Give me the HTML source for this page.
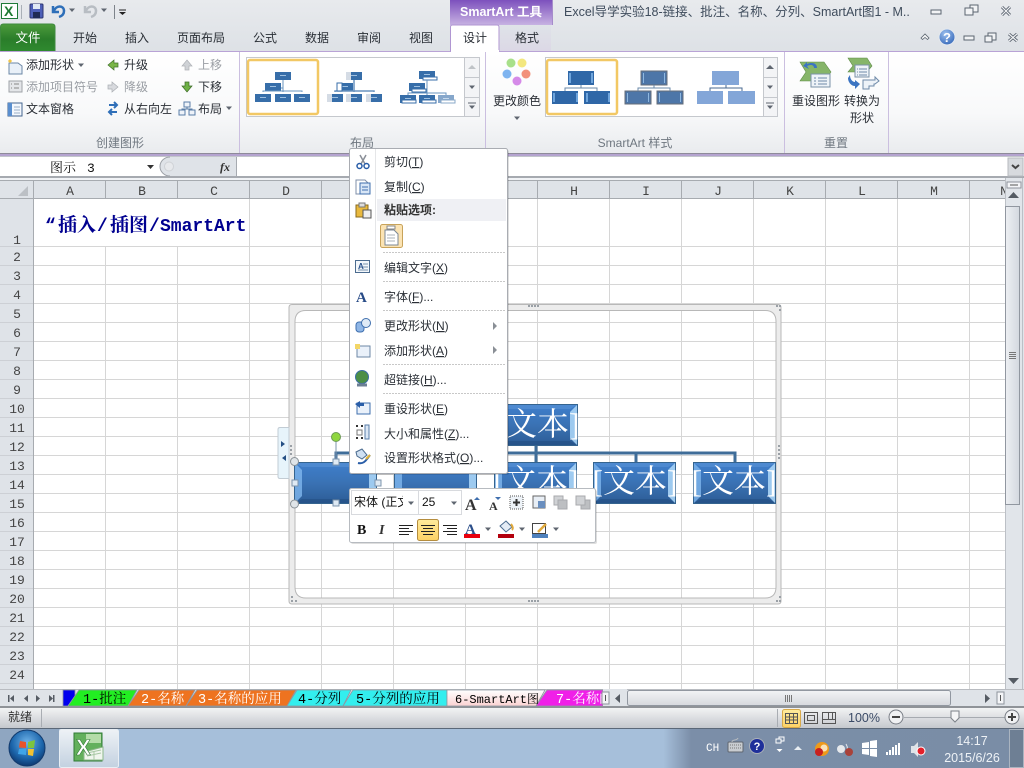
<!DOCTYPE html>
<html><head><meta charset="utf-8"><title>Excel SmartArt</title>
<style>
html,body{margin:0;padding:0;width:1024px;height:768px;overflow:hidden;background:#fff}
svg{display:block}
text{font-family:"Liberation Sans","Noto Sans CJK SC",sans-serif;font-size:12px;fill:#2a2f36;white-space:pre}
.g{fill:#9a9ea4}.l{fill:#6f7780}.c{text-anchor:middle}
.m{font-family:"Liberation Mono","Noto Serif CJK SC",monospace;font-size:13px;fill:#444;text-anchor:middle}
.tab{font-family:"Liberation Mono","Noto Serif CJK SC",monospace;font-size:13.5px;fill:#000}
.w{fill:#fff}
.big{font-family:"Liberation Serif","Noto Serif CJK SC",serif;font-size:32px;fill:#fff;text-anchor:middle}
.cell{font-family:"Liberation Mono","Noto Serif CJK SC",monospace;font-weight:bold;font-size:18px;fill:#000090}
</style></head><body>
<svg xmlns="http://www.w3.org/2000/svg" width="1024" height="768" viewBox="0 0 1024 768">
<defs>
<clipPath id="fontclip"><rect x="352" y="491" width="51" height="23"/></clipPath>
<linearGradient id="rib" x1="0" y1="0" x2="0" y2="1"><stop offset="0" stop-color="#fff"/><stop offset=".6" stop-color="#f8f9fa"/><stop offset="1" stop-color="#e9ebee"/></linearGradient>
<linearGradient id="top" x1="0" y1="0" x2="0" y2="1"><stop offset="0" stop-color="#e8eaed"/><stop offset="1" stop-color="#dde1e6"/></linearGradient>
<linearGradient id="green" x1="0" y1="0" x2="0" y2="1"><stop offset="0" stop-color="#4d9b3c"/><stop offset=".55" stop-color="#2a7d2a"/><stop offset="1" stop-color="#2f8a2f"/></linearGradient>
<linearGradient id="pur" x1="0" y1="0" x2="0" y2="1"><stop offset="0" stop-color="#7d50bd"/><stop offset="1" stop-color="#c7b2e2"/></linearGradient>
<linearGradient id="pur2" x1="0" y1="0" x2="0" y2="1"><stop offset="0" stop-color="#dfe3e8"/><stop offset="1" stop-color="#dcd8e6"/></linearGradient>
<linearGradient id="box" x1="0" y1="0" x2="0" y2="1"><stop offset="0" stop-color="#3f7fcc"/><stop offset=".5" stop-color="#3a72b4"/><stop offset="1" stop-color="#2c5c95"/></linearGradient>
<linearGradient id="st" x1="0" y1="0" x2="0" y2="1"><stop offset="0" stop-color="#f2f3f4"/><stop offset="1" stop-color="#c5c8cd"/></linearGradient>
<linearGradient id="thumbv" x1="0" y1="0" x2="1" y2="0"><stop offset="0" stop-color="#eef0f3"/><stop offset="1" stop-color="#d3d8df"/></linearGradient>
<linearGradient id="thumbh" x1="0" y1="0" x2="0" y2="1"><stop offset="0" stop-color="#f2f3f5"/><stop offset="1" stop-color="#d6d9de"/></linearGradient>
<linearGradient id="tb" x1="0" y1="0" x2="1" y2="0"><stop offset="0" stop-color="#a6bfda"/><stop offset=".648" stop-color="#a6bfda"/><stop offset=".675" stop-color="#7b8ea8"/><stop offset="1" stop-color="#7a8da6"/></linearGradient>
<linearGradient id="xb" x1="0" y1="0" x2="0" y2="1"><stop offset="0" stop-color="#eef2f6"/><stop offset="1" stop-color="#c3d1e0"/></linearGradient>
<linearGradient id="gold" x1="0" y1="0" x2="0" y2="1"><stop offset="0" stop-color="#ffeb9c"/><stop offset="1" stop-color="#fdd265"/></linearGradient>
<linearGradient id="tw" x1="0" y1="0" x2="0" y2="1"><stop offset="0" stop-color="#fff"/><stop offset="1" stop-color="#fbd2d2"/></linearGradient>
<radialGradient id="orb" cx=".5" cy=".35" r=".7"><stop offset="0" stop-color="#6fb3e8"/><stop offset=".6" stop-color="#1c66ac"/><stop offset="1" stop-color="#0b2f63"/></radialGradient>
<radialGradient id="hb" cx=".4" cy=".3" r=".8"><stop offset="0" stop-color="#9cc0ee"/><stop offset="1" stop-color="#2e62b6"/></radialGradient>
<g id="bx"><rect x=".5" y=".5" width="82" height="41" fill="url(#box)" stroke="#35648f"/><path d="M1 1l7 7v26l-7 7z" fill="#7fb6ee" opacity=".8"/><path d="M82 1l-7 7v26l7 7z" fill="#a8d4f6" opacity=".9"/><path d="M1 1h81l-7 4H8z" fill="#5a93d6" opacity=".6"/><path d="M1 41h81l-7-4H8z" fill="#234f82" opacity=".6"/></g>
<g id="sm"><rect width="16" height="8" fill="#376ea9"/><rect x="5" y="3" width="6" height="1" fill="#9fc0e0"/></g>
<g id="tag"><path d="M0 0h9l3 3v11H0z" fill="#fff" stroke="#7f8fa8"/></g>
<g id="hd"><rect width="6" height="6" fill="#dfeaf4" stroke="#7d94ad"/></g>
<g id="rh"><circle r="4" fill="#dfe4e8" stroke="#8a9298"/></g>
<g id="aup"><path d="M-4 2L0-2 4 2z" fill="#5f6670"/></g>
<g id="adn"><path d="M-3-1.500h6L0 2z" fill="#5f6670"/></g>
<g id="ar"><path d="M0-4L4 0 0 4z" fill="#8a8f96"/></g>
<g id="s"><path d="M1 3h9l4 3v8H1z" fill="#e9f0f8" stroke="#6c87a6"/><path d="M0 1h4M2-1v4M1 0l2 2M3 0l-2 2" stroke="#f0c64a" stroke-width="1"/></g>
</defs>

<!-- Title bar -->
<rect width="1024" height="52" fill="url(#top)"/>
<rect x="1.500" y="3.500" width="16" height="15" fill="#fff" stroke="#1f7a38"/><text x="4" y="16" style="font-weight:bold;font-size:14px;fill:#1e7a32">X</text>
<path d="M21.500 5v14" stroke="#aab0b7"/>
<rect x="30" y="4" width="13" height="14" rx="1" fill="#4d5fb8" stroke="#2d3470"/><rect x="33" y="4" width="7" height="5" fill="#dfe8f5"/><rect x="33" y="12" width="7" height="6" fill="#1f2a55"/>
<path d="M53 6v6h6M54 11c2-6 10-6 10 0 0 3-2 5-5 6" fill="none" stroke="#2e6fb9" stroke-width="2.500"/>
<use href="#adn" x="72" y="10"/>
<path d="M85 6v6h6M86 11c2-6 10-6 10 0 0 3-2 5-5 6" fill="none" stroke="#b8bdc3" stroke-width="2.500"/>
<use href="#adn" x="104" y="10"/>
<path d="M114.500 5v14" stroke="#7d838a"/>
<path d="M119 10h7" stroke="#222"/><path d="M119 12h7l-3.500 3z" fill="#222"/>

<!-- contextual title -->
<rect x="450" width="102" height="25" fill="url(#pur)"/>
<text x="460" y="16" style="font-weight:bold;fill:#fff;font-size:12.500px">SmartArt 工具</text>
<rect x="552" width="1" height="25" fill="#a68ccb"/>
<text x="564" y="16" style="fill:#3f4c5c;font-size:12.500px">Excel导学实验18-链接、批注、名称、分列、SmartArt图1 - M..</text>
<!-- window controls -->
<rect x="931" y="10" width="10" height="4" fill="#f2f3f5" stroke="#5b6470"/>
<g fill="#f2f3f5" stroke="#5b6470"><rect x="970" y="5" width="8" height="7"/><rect x="965" y="8" width="8" height="7"/></g>
<path d="M1002 7l8 8m0-8l-8 8" stroke="#5b6470" stroke-width="3"/><path d="M1002 7l8 8m0-8l-8 8" stroke="#f2f3f5" stroke-width="1.200"/>
<path d="M921 38l4-4 4 4-1.500 1.500-2.500-2-2.500 2z" fill="#f4f5f6" stroke="#59626d" stroke-width=".8"/>
<circle cx="947" cy="37" r="8" fill="url(#hb)" stroke="#e3e8ef"/><text x="947" y="42" class="c" style="font-weight:bold;font-size:13px;fill:#fff">?</text>
<rect x="964" y="36" width="10" height="4" fill="#f2f3f5" stroke="#5b6470"/>
<g fill="#f2f3f5" stroke="#5b6470"><rect x="988" y="33" width="8" height="7"/><rect x="985" y="36" width="7" height="6"/></g>
<path d="M1009 34l8 7m0-7l-8 7" stroke="#5b6470" stroke-width="3"/><path d="M1009 34l8 7m0-7l-8 7" stroke="#f2f3f5" stroke-width="1.200"/>

<!-- Tabs -->
<path d="M.5 51.500V27q0-3 3-3H52q3 0 3 3v24.500z" fill="url(#green)" stroke="#3f8a3f"/>
<text x="28" y="42" class="c w" style="font-size:12.500px;fill:#fff">文件</text>
<rect x="500" y="25" width="51" height="26" fill="url(#pur2)"/>
<g style="font-size:12px"><text x="85" y="42" class="c">开始</text><text x="137" y="42" class="c">插入</text><text x="201" y="42" class="c">页面布局</text><text x="265" y="42" class="c">公式</text><text x="317" y="42" class="c">数据</text><text x="369" y="42" class="c">审阅</text><text x="421" y="42" class="c">视图</text><text x="527" y="42" class="c">格式</text></g>

<!-- Ribbon -->
<rect y="52" width="1024" height="102" fill="url(#rib)"/>
<path d="M0 51.500H1024" stroke="#b9a3d6"/>
<path d="M450.500 51.500V27q0-2 2-2H497q2 0 2 2v24.500" fill="#fff" stroke="#b096d2"/>
<rect x="451" y="50" width="48" height="3" fill="#fff"/>
<text x="475" y="42" class="c">设计</text>
<path d="M239.500 52v101M485.500 52v101M784.500 52v101M888.500 52v101" stroke="#cbbfe0"/>
<rect y="153" width="1024" height="3" fill="#b4a3cf"/>
<rect y="153" width="1024" height="1" fill="#8e8a9a"/>
<text x="120" y="147" class="c l">创建图形</text><text x="362" y="147" class="c l">布局</text><text x="635" y="147" class="c l">SmartArt 样式</text><text x="836" y="147" class="c l">重置</text>

<!-- Create shape -->
<use href="#s" x="8" y="60"/>
<text x="26" y="69">添加形状</text><use href="#adn" x="81" y="65" />
<rect x="9" y="81" width="13" height="11" fill="#e4e6e9" stroke="#9fa3a8"/><path d="M11 84h1m2 0h5M11 88h1m2 0h5" stroke="#888"/>
<text x="26" y="91" class="g">添加项目符号</text>
<rect x="8" y="103" width="14" height="13" fill="#f4f8fd" stroke="#44658f"/><rect x="8" y="103" width="4" height="13" fill="#5a8fcf"/><path d="M14 107h6M14 110h6M14 113h6" stroke="#9bb0c8"/>
<text x="26" y="113">文本窗格</text>
<path d="M108 65l6-5v3h4v4h-4v3z" fill="#7ab648" stroke="#3f6f2a" stroke-width=".7"/>
<text x="124" y="69">升级</text>
<path d="M118 87l-6-5v3h-4v4h4v3z" fill="#d8dade" stroke="#aaaeb3" stroke-width=".7"/>
<text x="124" y="91" class="g">降级</text>
<path d="M109 105h8M114 102l3 3-3 3" stroke="#2f6fb8" stroke-width="2" fill="none"/><path d="M117 112h-8M112 109l-3 3 3 3" stroke="#2f6fb8" stroke-width="2" fill="none"/>
<text x="124" y="113">从右向左</text>
<path d="M187 60l5 6h-3v4h-4v-4h-3z" fill="#cfd2d6" stroke="#aeb1b6" stroke-width=".7"/>
<text x="198" y="69" class="g">上移</text>
<path d="M187 92l5-6h-3v-4h-4v4h-3z" fill="#6eb045" stroke="#3c6a28" stroke-width=".7"/>
<text x="198" y="91">下移</text>
<g fill="#eef3f9" stroke="#5a7ea8"><rect x="184" y="102" width="6" height="5"/><rect x="179" y="110" width="6" height="5"/><rect x="189" y="110" width="6" height="5"/></g><path d="M187 107v2M182 110v-1h10v1" fill="none" stroke="#5a7ea8"/>
<text x="198" y="113">布局</text><use href="#adn" x="229" y="108"/>

<!-- Layout gallery -->
<rect x="246.500" y="57.500" width="233" height="59" fill="#fff" stroke="#c5c8cd"/>
<rect x="248" y="60" width="70" height="54" rx="2" fill="#fff" stroke="#f2c864" stroke-width="2.500"/>
<use href="#sm" x="275" y="72"/><use href="#sm" x="265" y="83"/><use href="#sm" x="255" y="94"/><use href="#sm" x="275" y="94"/><use href="#sm" x="294" y="94"/>
<path d="M283 80v12M263 92v-1h39v1M281 88h2" fill="none" stroke="#6a94bf"/>
<use href="#sm" x="346" y="72"/><use href="#sm" x="337" y="83"/><use href="#sm" x="327" y="94"/><use href="#sm" x="346" y="94"/><use href="#sm" x="366" y="94"/>
<path d="M354 80v12M335 92v-1h39v1" fill="none" stroke="#6a94bf" stroke-width="1.500"/>
<g fill="#d5dce5"><rect x="346" y="72" width="5" height="8"/><rect x="337" y="83" width="5" height="8" fill="#fff" stroke="#376ea9"/><rect x="327" y="94" width="5" height="8"/><rect x="346" y="94" width="5" height="8"/><rect x="366" y="94" width="5" height="8"/></g>
<use href="#sm" x="419" y="71"/><use href="#sm" x="409" y="83"/><use href="#sm" x="400" y="95"/><use href="#sm" x="419" y="95"/><use href="#sm" x="438" y="95" opacity=".6"/>
<g fill="#fff" stroke="#376ea9"><rect x="423" y="77" width="14" height="3"/><rect x="412" y="89" width="14" height="3"/><rect x="402" y="100" width="14" height="3"/><rect x="422" y="100" width="14" height="3"/><rect x="441" y="100" width="14" height="3" stroke="#8aa8c8"/></g>
<path d="M427 80v15M408 95v-2h38v2" fill="none" stroke="#6a94bf"/>
<rect x="464.500" y="57.500" width="15" height="59" fill="#f3f4f6" stroke="#c5c8cd"/><path d="M465 77.500h14M465 97.500h14" stroke="#c5c8cd"/>
<use href="#aup" x="472" y="67" opacity=".35"/><use href="#adn" x="472" y="87"/><path d="M468 103h8" stroke="#5f6670"/><use href="#adn" x="472" y="107"/>

<!-- Change colours -->
<circle cx="511" cy="63" r="4.500" fill="#a8e08a"/><circle cx="522" cy="63" r="4.500" fill="#f3e77e"/><circle cx="507" cy="74" r="4.500" fill="#7eb4f0"/><circle cx="526" cy="74" r="4.500" fill="#f2917b"/><circle cx="517" cy="81" r="4.500" fill="#d58ae8"/>
<text x="517" y="105" class="c">更改颜色</text><use href="#adn" x="517" y="118"/>

<!-- Style gallery -->
<rect x="545.500" y="57.500" width="232" height="59" fill="#fff" stroke="#c5c8cd"/>
<rect x="547" y="60" width="70" height="54" rx="2" fill="#fff" stroke="#f2c864" stroke-width="2.500"/>
<g><rect x="568" y="71" width="26" height="14" fill="#2f67a7"/><rect x="552" y="91" width="26" height="13" fill="#2f67a7"/><rect x="584" y="91" width="26" height="13" fill="#2f67a7"/><path d="M581 85v3M565 91v-3h32v3" fill="none" stroke="#6a88a8"/></g>
<g fill="#6fa5dc"><rect x="569" y="73" width="2" height="10"/><rect x="591" y="73" width="2" height="10"/><rect x="553" y="93" width="2" height="9"/><rect x="586" y="93" width="2" height="9"/><rect x="576" y="93" width="2" height="9"/><rect x="608" y="93" width="2" height="9"/></g>
<g fill="#4d76a8" stroke="#666e78"><rect x="641" y="71" width="26" height="14"/><rect x="625" y="91" width="26" height="13"/><rect x="657" y="91" width="26" height="13"/></g>
<g fill="#8fb8e0"><rect x="643" y="73" width="1" height="10"/><rect x="664" y="73" width="1" height="10"/><rect x="627" y="93" width="1" height="9"/><rect x="648" y="93" width="1" height="9"/><rect x="659" y="93" width="1" height="9"/><rect x="680" y="93" width="1" height="9"/></g>
<path d="M654 85v3M638 91v-3h32v3" fill="none" stroke="#6a88a8"/>
<g fill="#83a6d8"><rect x="712" y="71" width="27" height="14"/><rect x="697" y="91" width="26" height="13"/><rect x="728" y="91" width="27" height="13"/></g>
<path d="M726 85v3M710 91v-3h32v3" fill="none" stroke="#4a6a90"/>
<rect x="763.500" y="57.500" width="14" height="59" fill="#f3f4f6" stroke="#c5c8cd"/><path d="M764 77.500h14M764 97.500h14" stroke="#c5c8cd"/>
<use href="#aup" x="770" y="67"/><use href="#adn" x="770" y="87"/><path d="M766 103h8" stroke="#5f6670"/><use href="#adn" x="770" y="107"/>

<!-- Reset -->
<path d="M800 62h24l7 10-7 9h-24l6-9z" fill="#86b569" stroke="#5f8c48" stroke-width=".6"/>
<rect x="811" y="74" width="19" height="13" fill="#eef3f8" stroke="#7b92a8"/><path d="M814 78h2m2 0h9M814 81h2m2 0h9M814 84h2m2 0h9" stroke="#6e8aa8"/>
<path d="M803 66l4-4v2c5-2 10-1 10 4l-3 0c0-3-3-4-7-2l2 3z" fill="#3b74c2"/>
<text x="816" y="105" class="c">重设图形</text>
<path d="M848 58h19l5 8-5 6h-19l5-6z" fill="#86b569" stroke="#5f8c48" stroke-width=".6"/>
<rect x="855" y="65" width="14" height="12" fill="#eef3f8" stroke="#7b92a8"/><path d="M857 69h1m1 0h8M857 72h1m1 0h8M857 75h1m1 0h8" stroke="#6e8aa8"/>
<path d="M850 75c0 5 3 7 5 7v-2l5 4-5 5v-3c-4 0-7-4-7-8z" fill="#3b74c2"/>
<path d="M863 80h12v-3l4 4-4 3-1 0v2h-5v3h-6z" fill="#eef3f8" stroke="#6e8aa8"/>
<text x="862" y="105" class="c">转换为</text><text x="862" y="122" class="c">形状</text>

<!-- Formula bar -->
<rect y="156" width="1024" height="21" fill="#fff"/>
<rect y="176" width="1024" height="2" fill="#a6aab0"/>
<rect y="156" width="1024" height="1" fill="#c3c6cc"/>
<rect x="160" y="157" width="77" height="19" fill="#dfe3e8"/>
<path d="M236.500 157v19" stroke="#a6aab0"/>
<path d="M170 157a10 9.500 0 0 0 0 19h-10v-19z" fill="#fff"/>
<path d="M170 157a10 9.500 0 0 0 0 19" fill="none" stroke="#9ea2a8"/>
<circle cx="169" cy="166.500" r="4.500" fill="#e7e9ec" stroke="#cfd2d6"/>
<text x="50" y="172" style="font-size:13px;font-family:'Liberation Mono','Noto Serif CJK SC',monospace;fill:#111">图示<tspan x="87">3</tspan></text>
<path d="M147 165h7l-3.500 4z" fill="#333"/>
<text x="220" y="171" style="font-family:'Liberation Serif',serif;font-style:italic;font-weight:bold;font-size:12px;fill:#333">fx</text>
<rect x="1008" y="158" width="15" height="18" fill="#d7dade" stroke="#b7babf"/><path d="M1012 165l3.500 3 3.500-3" fill="none" stroke="#444" stroke-width="2"/>

<!-- Grid -->
<rect y="178" width="1024" height="511" fill="#fff"/>
<rect y="181" width="1005" height="18" fill="#dfe3e8"/>
<rect y="199" width="33" height="490" fill="#dfe3e8"/>
<rect y="178" width="1024" height="3" fill="#f1f3f6"/>
<path d="M0 180.500H1005M0 198.500H1005M33.500 181V689" stroke="#a7abb0"/>
<path d="M28 186v10H18z" fill="#bcc0c5"/>
<g stroke="#a7abb0"><path d="M105.500 181v18M177.500 181v18M249.500 181v18M321.500 181v18M393.500 181v18M465.500 181v18M537.500 181v18M609.500 181v18M681.500 181v18M753.500 181v18M825.500 181v18M897.500 181v18M969.500 181v18"/></g>
<g stroke="#cdd0d5"><path d="M0 246.500h33M0 265.500h33M0 284.500h33M0 303.500h33M0 322.500h33M0 341.500h33M0 360.500h33M0 379.500h33M0 398.500h33M0 417.500h33M0 436.500h33M0 455.500h33M0 474.500h33M0 493.500h33M0 512.500h33M0 531.500h33M0 550.500h33M0 569.500h33M0 588.500h33M0 607.500h33M0 626.500h33M0 645.500h33M0 664.500h33M0 683.500h33"/></g>
<g stroke="#d6d6d6"><path d="M249.500 199v490M321.500 199v490M393.500 199v490M465.500 199v490M537.500 199v490M609.500 199v490M681.500 199v490M753.500 199v490M825.500 199v490M897.500 199v490M969.500 199v490M105.500 246v443M177.500 246v443"/>
<path d="M34 246.500h971M34 265.500h971M34 284.500h971M34 303.500h971M34 322.500h971M34 341.500h971M34 360.500h971M34 379.500h971M34 398.500h971M34 417.500h971M34 436.500h971M34 455.500h971M34 474.500h971M34 493.500h971M34 512.500h971M34 531.500h971M34 550.500h971M34 569.500h971M34 588.500h971M34 607.500h971M34 626.500h971M34 645.500h971M34 664.500h971M34 683.500h971"/></g>
<g><text class="m" x="70" y="195">A</text><text class="m" x="142" y="195">B</text><text class="m" x="214" y="195">C</text><text class="m" x="286" y="195">D</text><text class="m" x="358" y="195">E</text><text class="m" x="574" y="195">H</text><text class="m" x="646" y="195">I</text><text class="m" x="718" y="195">J</text><text class="m" x="790" y="195">K</text><text class="m" x="862" y="195">L</text><text class="m" x="934" y="195">M</text><text class="m" x="1004" y="195">N</text></g>
<g><text class="m" x="17" y="244">1</text><text class="m" x="17" y="261">2</text><text class="m" x="17" y="280">3</text><text class="m" x="17" y="299">4</text><text class="m" x="17" y="318">5</text><text class="m" x="17" y="337">6</text><text class="m" x="17" y="356">7</text><text class="m" x="17" y="375">8</text><text class="m" x="17" y="394">9</text><text class="m" x="17" y="413">10</text><text class="m" x="17" y="432">11</text><text class="m" x="17" y="451">12</text><text class="m" x="17" y="470">13</text><text class="m" x="17" y="489">14</text><text class="m" x="17" y="508">15</text><text class="m" x="17" y="527">16</text><text class="m" x="17" y="546">17</text><text class="m" x="17" y="565">18</text><text class="m" x="17" y="584">19</text><text class="m" x="17" y="603">20</text><text class="m" x="17" y="622">21</text><text class="m" x="17" y="641">22</text><text class="m" x="17" y="660">23</text><text class="m" x="17" y="679">24</text></g>
<text class="cell" x="45" y="231">“<tspan x="58" style="font-size:19px">插入</tspan><tspan x="97">/</tspan><tspan x="110" style="font-size:19px">插图</tspan><tspan x="149">/</tspan><tspan x="160">SmartArt</tspan></text>

<!-- SmartArt frame -->
<path fill-rule="evenodd" d="M292 304.500H778q3 0 3 3V601q0 3-3 3H292q-3 0-3-3V307.500q0-3 3-3z M306 310.500q-11 0-11 11V587q0 11 11 11H765q11 0 11-11V321.500q0-11-11-11z" fill="#ececec" stroke="#b8b8b8"/>
<g fill="#9aa0a6"><rect x="528" y="305" width="2" height="2"/><rect x="531" y="305" width="2" height="2"/><rect x="534" y="305" width="2" height="2"/><rect x="537" y="305" width="2" height="2"/><rect x="528" y="600" width="2" height="2"/><rect x="531" y="600" width="2" height="2"/><rect x="534" y="600" width="2" height="2"/><rect x="537" y="600" width="2" height="2"/><rect x="778" y="445" width="2" height="2"/><rect x="778" y="449" width="2" height="2"/><rect x="778" y="453" width="2" height="2"/><rect x="778" y="457" width="2" height="2"/><rect x="290" y="445" width="2" height="2"/><rect x="290" y="449" width="2" height="2"/><rect x="290" y="453" width="2" height="2"/><rect x="776" y="305" width="2" height="2"/><rect x="779" y="305" width="2" height="2"/><rect x="779" y="309" width="2" height="2"/><rect x="291" y="600" width="2" height="2"/><rect x="291" y="596" width="2" height="2"/><rect x="295" y="600" width="2" height="2"/><rect x="776" y="600" width="2" height="2"/><rect x="779" y="600" width="2" height="2"/><rect x="779" y="596" width="2" height="2"/></g>

<!-- Org chart -->
<path d="M536 446v16M336 461v-8H735v9M436 453v9M636 453v9" fill="none" stroke="#3f6d99" stroke-width="3"/>
<use href="#bx" x="495" y="404"/><text class="big" x="537" y="435">[文本]</text>
<use href="#bx" x="294" y="462"/>
<use href="#bx" x="394" y="462"/>
<use href="#bx" x="494" y="462"/><text class="big" x="536" y="492">[文本]</text>
<use href="#bx" x="593" y="462"/><text class="big" x="635" y="492">[文本]</text>
<use href="#bx" x="693" y="462"/><text class="big" x="734" y="492">[文本]</text>
<!-- Handles -->
<path d="M336 441v20" stroke="#7d94ad"/>
<circle cx="336" cy="437" r="4.500" fill="#8fd63f" stroke="#6c9a55"/>
<use href="#rh" x="294.500" y="461.500"/><use href="#rh" x="294.500" y="504"/>
<use href="#hd" x="333" y="459"/><use href="#hd" x="333" y="500"/><use href="#hd" x="292" y="480"/><use href="#hd" x="375" y="480"/>
<path d="M289 427.500h-9q-2 0-2 2v47q0 2 2 2h9z" fill="#e7f4fb" stroke="#c2ccd4"/>
<path d="M281 441l4 3-4 3z M286 455l-4 3 4 3z" fill="#244f84"/>

<!-- Context menu -->
<rect x="351" y="150" width="158" height="325" rx="2" fill="#000" opacity=".12"/>
<rect x="349.500" y="148.500" width="158" height="325" rx="2" fill="#fff" stroke="#a9acb2"/>
<path d="M375.500 149v324" stroke="#e5e6e8"/>
<rect x="377" y="199" width="129" height="22" fill="#eff0f4"/>
<g stroke="#c8c8c8" stroke-dasharray="2 1"><path d="M383 252.500h122M383 281.500h122M383 310.500h122M383 364.500h122M383 393.500h122"/></g>
<text x="384" y="166">剪切(<tspan text-decoration="underline">T</tspan>)</text>
<text x="384" y="191">复制(<tspan text-decoration="underline">C</tspan>)</text>
<text x="384" y="214" style="font-weight:bold;fill:#333">粘贴选项:</text>
<text x="384" y="272">编辑文字(<tspan text-decoration="underline">X</tspan>)</text>
<text x="384" y="301">字体(<tspan text-decoration="underline">F</tspan>)...</text>
<text x="384" y="330">更改形状(<tspan text-decoration="underline">N</tspan>)</text>
<text x="384" y="355">添加形状(<tspan text-decoration="underline">A</tspan>)</text>
<text x="384" y="384">超链接(<tspan text-decoration="underline">H</tspan>)...</text>
<text x="384" y="413">重设形状(<tspan text-decoration="underline">E</tspan>)</text>
<text x="384" y="438">大小和属性(<tspan text-decoration="underline">Z</tspan>)...</text>
<text x="384" y="462">设置形状格式(<tspan text-decoration="underline">O</tspan>)...</text>
<use href="#ar" x="493" y="326"/><use href="#ar" x="493" y="350"/>
<!-- menu icons -->
<path d="M360 155l5 9M366 155l-5 9" stroke="#8a8f98" stroke-width="1.500"/><circle cx="359.500" cy="166" r="2.500" fill="none" stroke="#2a5ea8" stroke-width="1.500"/><circle cx="366.500" cy="166" r="2.500" fill="none" stroke="#2a5ea8" stroke-width="1.500"/>
<use href="#tag" x="356" y="180"/><rect x="360" y="183" width="10" height="11" fill="#d8e6f6" stroke="#3f6fae"/><path d="M362 187h6M362 190h6" stroke="#3f6fae"/>
<rect x="356" y="205" width="12" height="12" fill="#e9b93e" stroke="#8a6a1c"/><rect x="359" y="203" width="6" height="4" fill="#ddd" stroke="#777"/><rect x="363" y="210" width="8" height="8" fill="#eee" stroke="#555"/>
<rect x="380.500" y="224.500" width="22" height="23" rx="2" fill="#fbe3b3" stroke="#c8a35a"/><rect x="387" y="226" width="8" height="3" fill="#fff" stroke="#888"/><path d="M385 230h9l4 4v11h-13z" fill="#fff" stroke="#7b8794"/><path d="M387 235h8M387 238h8M387 241h8" stroke="#aab2ba"/>
<rect x="355.500" y="260.500" width="14" height="12" fill="#f3f7fb" stroke="#4c6c8f"/><text x="358" y="269" style="font-size:8px;font-weight:bold;fill:#27508a">A</text><path d="M363 264h5M363 267h5M358 270h10" stroke="#7a93ae"/>
<text x="356" y="302" style="font-family:'Liberation Serif',serif;font-weight:bold;font-size:15px;fill:#274a86">A</text>
<rect x="356" y="322" width="8" height="10" rx="3" fill="#8fb6e6" stroke="#3f6fae"/><circle cx="366" cy="323" r="4.500" fill="#dfeaf6" stroke="#3f6fae"/>
<rect x="357" y="346" width="13" height="11" fill="#eaf1fa" stroke="#6c87a6"/><path d="M355 344h5v5h-5z" fill="#f3d667"/>
<circle cx="362" cy="377" r="6.500" fill="#4c8f46" stroke="#3b6ea5"/><path d="M357 385h10" stroke="#6c7f94" stroke-width="3"/>
<rect x="357" y="403" width="13" height="11" fill="#eaf1fa" stroke="#3f6fae"/><path d="M355 404l5-3v2h4v3h-4v2z" fill="#2a5ea8"/>
<g fill="#333"><rect x="356" y="425" width="2" height="2"/><rect x="361" y="425" width="2" height="2"/><rect x="356" y="437" width="2" height="2"/><rect x="361" y="437" width="2" height="2"/></g><rect x="357" y="430" width="5" height="5" fill="#fff" stroke="#777"/><rect x="365" y="425" width="4" height="14" fill="#dbe7f5" stroke="#5a7ea8"/>
<path d="M356 452l6-3 5 6-5 4-5-3z" fill="#cfe0f2" stroke="#4c6c8f"/><path d="M358 463c4 1 7-1 9-4l3-4" fill="none" stroke="#2a5ea8" stroke-width="2"/><path d="M366 459l4-4" stroke="#e0b23a" stroke-width="2"/>

<!-- Mini toolbar -->
<rect x="351" y="490" width="246" height="54" rx="2" fill="#000" opacity=".13"/>
<rect x="349.500" y="488.500" width="246" height="54" rx="2" fill="#fff" stroke="#b7bbc0"/>
<rect x="351.500" y="490.500" width="67" height="24" fill="#fff" stroke="#d8dade"/>
<rect x="418.500" y="490.500" width="43" height="24" fill="#fff" stroke="#d8dade"/>
<text x="354" y="506" clip-path="url(#fontclip)" style="fill:#111;font-size:12px">宋体 (正文</text>
<use href="#adn" x="411" y="503"/><text x="422" y="506" style="font-size:12px;fill:#111">25</text><use href="#adn" x="454" y="503"/>
<text x="465" y="510" style="font-family:'Liberation Serif',serif;font-weight:bold;font-size:16px;fill:#333">A</text><path d="M474 500l3-3 3 3z" fill="#3f6fae"/>
<text x="489" y="510" style="font-family:'Liberation Serif',serif;font-weight:bold;font-size:12px;fill:#333">A</text><path d="M495 497h6l-3 3z" fill="#3f6fae"/>
<rect x="510" y="496" width="13" height="13" fill="#eef3f8" stroke="#555" stroke-dasharray="1 1"/><path d="M516.500 499v7M513 502.500h7" stroke="#333" stroke-width="2"/>
<rect x="533" y="496" width="12" height="12" fill="#e8eef5" stroke="#666"/><rect x="538" y="501" width="7" height="7" fill="#6a8fbf"/>
<g fill="#d0d2d5" stroke="#a8aaad"><rect x="554" y="496" width="9" height="9"/><rect x="558" y="500" width="9" height="9" fill="#bdbfc2"/><rect x="581" y="500" width="9" height="9" fill="#bdbfc2"/><rect x="576" y="496" width="9" height="9"/></g>
<text x="357" y="534" style="font-family:'Liberation Serif',serif;font-weight:bold;font-size:14px;fill:#111">B</text>
<text x="379" y="534" style="font-family:'Liberation Serif',serif;font-style:italic;font-weight:bold;font-size:14px;fill:#333">I</text>
<path d="M399 525.500h14M399 528.500h10M399 531.500h14M399 534.500h10" stroke="#222"/>
<rect x="417.500" y="519.500" width="21" height="21" rx="2" fill="url(#gold)" stroke="#b58d3e"/>
<path d="M421 525.500h14M423 528.500h10M421 531.500h14M423 534.500h10" stroke="#222"/>
<path d="M443 525.500h14M447 528.500h10M443 531.500h14M447 534.500h10" stroke="#222"/>
<text x="465" y="534" style="font-family:'Liberation Serif',serif;font-weight:bold;font-size:15px;fill:#2c4f8a">A</text><rect x="464" y="534" width="16" height="4" fill="#e8000d"/><use href="#adn" x="488" y="529"/>
<path d="M500 526l6-5 6 6-6 5z" fill="#e4ecf5" stroke="#4c6c8f"/><path d="M511 524q3 4 1 6" stroke="#e0a83a" stroke-width="2" fill="none"/><rect x="498" y="534" width="16" height="4" fill="#b3000d"/><use href="#adn" x="522" y="529"/>
<rect x="532.500" y="523.500" width="13" height="10" fill="#fff" stroke="#444"/><path d="M538 532l8-8" stroke="#e0a83a" stroke-width="2.500"/><rect x="532" y="534" width="16" height="4" fill="#4f81bd"/><use href="#adn" x="556" y="529"/>

<!-- Scrollbars -->
<rect x="1005" y="178" width="19" height="511" fill="#e1e5ea"/>
<path d="M1005.500 178v511M1022.500 178v511" stroke="#bcc0c6"/>
<rect x="1007" y="182" width="14" height="6" fill="#f4f5f8" stroke="#8e949c"/><path d="M1010 185h8" stroke="#555"/>
<path d="M1008 198l5.500-6 5.500 6z" fill="#555b63"/>
<rect x="1005.500" y="206.500" width="14" height="298" fill="url(#thumbv)" stroke="#9197a0"/>
<path d="M1009 352.500h7M1009 354.500h7M1009 356.500h7M1009 358.500h7" stroke="#777"/>
<path d="M1008 678h11l-5.500 6z" fill="#555b63"/>

<!-- Tab strip -->
<rect y="689" width="1024" height="18" fill="#dfe3e8"/>
<path d="M0 689.500H1024" stroke="#b9bcc1"/>
<rect y="706" width="1024" height="2" fill="#8f9398"/>
<g fill="#555b63"><path d="M8 695v7h1.500v-7z M14 695v7l-4-3.500z M28 695v7l-4-3.500z M36 695l4 3.500-4 3.500z M53 695v7h1.500v-7z M49 695l4 3.500-4 3.500z"/></g>
<g stroke="#8f96a0" stroke-width=".8">
<path d="M63 690h12v6l-7 10h-5z" fill="#0000ee"/>
<path d="M68 706l11-16h58l-9 16z" fill="#22ee22"/>
<path d="M128 706l11-16h56l-9 16z" fill="#ee7320"/>
<path d="M186 706l11-16h99l-9 16z" fill="#ee7320"/>
<path d="M287 706l10-16h54l-8 16z" fill="#33eeee"/>
<path d="M343 706l10-16h94v16z" fill="#33eeee"/>
<path d="M447 690h98l-9 16h-89z" fill="url(#tw)"/>
<path d="M536 706l11-16h56v16z" fill="#f020e8"/>
</g>
<text class="tab" x="83" y="703">1-批注</text>
<text class="tab" x="141" y="703" style="fill:#fff">2-名称</text>
<text class="tab" x="198" y="703" style="fill:#fff">3-名称的应用</text>
<text class="tab" x="298" y="703">4-分列</text>
<text class="tab" x="356" y="703">5-分列的应用</text>
<text class="tab" x="455" y="703" style="font-size:12px">6-SmartArt图</text>
<text class="tab" x="556" y="703" style="fill:#fff">7-名称的</text>
<rect x="603" y="689" width="24" height="17" fill="#dfe3e8"/>
<rect x="602" y="692" width="7" height="12" fill="#f4f5f7" stroke="#8e949c"/><path d="M605.500 695v6" stroke="#555"/>
<path d="M620 694v9l-5-4.500z" fill="#555b63"/>
<rect x="627.500" y="690.500" width="323" height="15" rx="2" fill="url(#thumbh)" stroke="#9197a0"/>
<path d="M785.500 695v7M787.500 695v7M789.500 695v7M791.500 695v7" stroke="#777"/>
<path d="M985 694v9l5-4.500z" fill="#555b63"/>
<rect x="997" y="692" width="7" height="12" fill="#f4f5f7" stroke="#8e949c"/><path d="M1000.500 695v6" stroke="#555"/>

<!-- Status -->
<rect y="708" width="1024" height="20" fill="url(#st)"/>
<path d="M41.500 709v18" stroke="#a9adb3"/><path d="M777.500 709v18" stroke="#a9adb3"/>
<text x="8" y="721" style="fill:#333">就绪</text>
<rect x="782.500" y="709.500" width="18" height="18" rx="2" fill="url(#gold)" stroke="#d8a94a"/>
<g fill="none" stroke="#555"><rect x="785.500" y="713.500" width="12" height="10"/><path d="M785.500 717h12M785.500 720h12M789.500 713.500v10M793.500 713.500v10"/>
<rect x="804.500" y="712.500" width="13" height="11"/><rect x="807.500" y="715.500" width="7" height="5"/>
<rect x="822.500" y="712.500" width="13" height="11"/><path d="M828.500 712.500v7M832.500 712.500v7M822.500 719.500h13"/></g>
<text x="848" y="722" style="font-size:12.500px;fill:#3a4a66">100%</text>
<circle cx="896" cy="717" r="7" fill="#f0f1f3" stroke="#777c84"/><path d="M892 717h8" stroke="#444" stroke-width="2"/>
<path d="M904 717.500h102" stroke="#a6aab0"/>
<path d="M951 711h8v7l-4 4-4-4z" fill="#f4f5f6" stroke="#7c8188"/>
<circle cx="1012" cy="717" r="7" fill="#f0f1f3" stroke="#777c84"/><path d="M1008 717h8M1012 713v8" stroke="#444" stroke-width="2"/>

<!-- Taskbar -->
<rect y="728" width="1024" height="40" fill="url(#tb)"/>
<rect y="728" width="1024" height="1" fill="#5b6878"/>
<rect y="729" width="59" height="39" fill="#8fa6c1"/>
<circle cx="27" cy="748" r="18" fill="url(#orb)" stroke="#123a6d"/>
<path d="M20 741l6 1v6l-7-.5z" fill="#e8532a"/><path d="M28 742l7-2-1 8-6 0z" fill="#7cc43f"/><path d="M19 749l7 0v6l-8-1z" fill="#3fa4e8"/><path d="M28 749l6 0-1 7-5-1z" fill="#f2c230"/>
<rect x="59.500" y="729.500" width="59" height="38" rx="2" fill="url(#xb)" stroke="#e8eef4"/>
<rect x="74" y="733" width="28" height="28" fill="#63b05c" stroke="#2f7a35"/>
<rect x="86" y="734" width="15" height="9" fill="#b4dca8"/>
<path d="M84 752l19-5v13H84z" fill="#f0f6ee" stroke="#8db88a"/>
<path d="M87 753l14-3M87 756l14-3M94 751v9" stroke="#a8c8a4" fill="none"/>
<text x="76" y="755" style="font-family:'Liberation Sans',sans-serif;font-weight:bold;font-size:22px;fill:#fff;stroke:#2f7a35;stroke-width:.6">X</text>

<text x="706" y="751" style="font-family:'Liberation Mono',monospace;font-size:11px;fill:#fff">CH</text>
<rect x="728" y="742" width="15" height="10" rx="1" fill="#c8ccd0" stroke="#5f6670"/><path d="M730 745h11M730 748h11" stroke="#777" stroke-dasharray="1 1"/><path d="M732 742c0-3 5-1 6-4" fill="none" stroke="#b8bcc0"/>
<circle cx="757" cy="746" r="7.500" fill="#1e2f9a" stroke="#aab0b8"/><text x="757" y="750" class="c" style="font-weight:bold;font-size:11px;fill:#fff">?</text>
<rect x="779" y="737" width="5" height="4" fill="none" stroke="#fff"/><rect x="776" y="739" width="5" height="4" fill="#7a8da6" stroke="#fff"/>
<path d="M776.500 749h6l-3 3z" fill="#fff"/>
<path d="M794 750l4-4 4 4z" fill="#e8edf2"/>
<circle cx="822" cy="749" r="7" fill="#ef9a1a"/><circle cx="824" cy="748" r="3.500" fill="#fbe3b8"/><circle cx="819" cy="752" r="4" fill="#c8201e"/>
<circle cx="841" cy="749" r="4" fill="#e6e9ec"/><path d="M846 744q3 5 0 10" fill="none" stroke="#e6e9ec"/><circle cx="849" cy="752" r="4" fill="#a9423a"/>
<g fill="#fff"><path d="M862 743l7-1v6h-7zM870 741l7-1v8h-7zM862 749h7v6l-7-1zM870 749h7v8l-7-1z"/></g>
<g fill="#fff"><rect x="886" y="752" width="2" height="3"/><rect x="889" y="750" width="2" height="5"/><rect x="892" y="747" width="2" height="8"/><rect x="895" y="745" width="2" height="10"/><rect x="898" y="743" width="2" height="12"/></g>
<path d="M911 746h3l4-4v15l-4-4h-3z" fill="#dfe3e8"/><circle cx="921" cy="751" r="4" fill="#e3202a" stroke="#fff"/>
<text x="972" y="745" class="c" style="font-size:12.500px;fill:#eef2f6">14:17</text>
<text x="972" y="762" class="c" style="font-size:12.500px;fill:#eef2f6">2015/6/26</text>
<rect x="1009.500" y="729.500" width="14" height="38" fill="#6e7f94" stroke="#aab4c0"/>
</svg>
</body></html>
